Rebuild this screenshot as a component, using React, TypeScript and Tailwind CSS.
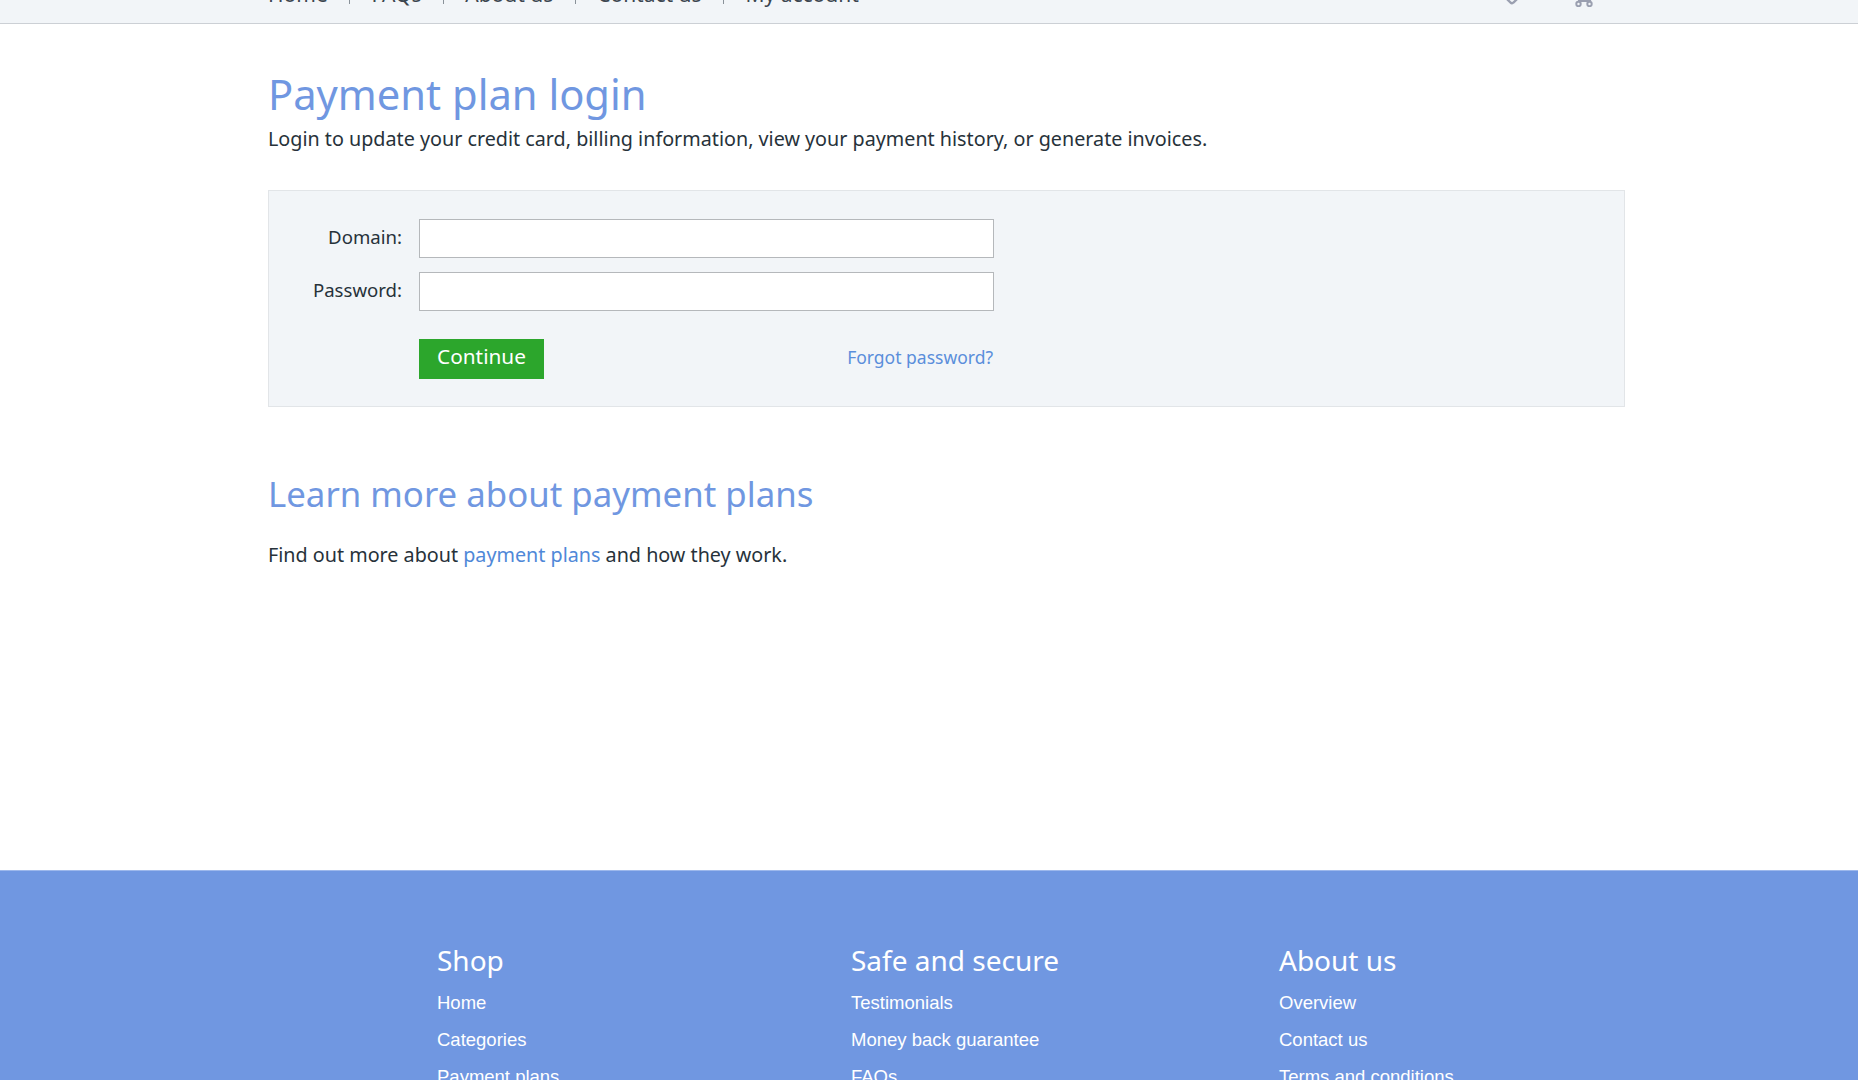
import { Heart } from 'lucide-react';

const navLinks = ['Home', 'FAQs', 'About us', 'Contact us', 'My account'];

const footerColumns = [
  { title: 'Shop', width: 'w-[414px]', links: ['Home', 'Categories', 'Payment plans'] },
  { title: 'Safe and secure', width: 'w-[428px]', links: ['Testimonials', 'Money back guarantee', 'FAQs'] },
  { title: 'About us', width: 'w-[300px]', links: ['Overview', 'Contact us', 'Terms and conditions'] },
];

function CartIcon() {
  return (
    <svg width="22" height="24" viewBox="0 0 22 24" fill="none" stroke="currentColor" strokeWidth="2">
      <path d="M1 3h3l2 15h11l2-11H5" />
      <circle cx="5.5" cy="21" r="2.2" />
      <circle cx="16.5" cy="21" r="2.2" />
    </svg>
  );
}

function Header() {
  return (
    <header className="h-[24px] overflow-hidden bg-[#f2f5f8] border-b border-[#ccd0d5]">
      <div className="ml-[268px] -mt-[26px] flex h-[42px] w-[1357px] items-center justify-between text-[21px] text-[#3c4650]">
        <nav className="flex items-center">
          {navLinks.map((link, i) => (
            <div key={link} className="flex items-center">
              {i > 0 && <span className="mx-[21.4px] h-[18px] w-px bg-[#8a9299]" />}
              <a>{link}</a>
            </div>
          ))}
        </nav>
        <div className="flex items-center gap-[50px] pr-[30px] text-[#9a9fb0]">
          <Heart size={22} strokeWidth={2.5} />
          <CartIcon />
        </div>
      </div>
    </header>
  );
}

function LoginForm() {
  return (
    <div className="mt-[38px] h-[217px] border border-[#e2e5e8] bg-[#f2f5f8] pl-[21px] pt-[28px]">
      <div className="flex items-center">
        <label className="w-[112px] pb-[4px] text-right text-[18.6px] text-[#27323a]">Domain:</label>
        <input className="ml-[17px] h-[39px] w-[575px] border border-[#b5b8bb] bg-white" />
      </div>
      <div className="mt-[14px] flex items-center">
        <label className="w-[112px] pb-[4px] text-right text-[18.6px] text-[#27323a]">Password:</label>
        <input type="password" className="ml-[17px] h-[39px] w-[575px] border border-[#b5b8bb] bg-white" />
      </div>
      <div className="ml-[129px] mt-[28px] flex w-[574px] items-center justify-between">
        <button className="h-[40px] w-[125px] bg-[#2ca62c] pb-[4px] text-[20.8px] text-white">Continue</button>
        <a className="pb-[3px] text-[17.5px] text-[#5a8edb]">Forgot password?</a>
      </div>
    </div>
  );
}

export default function App() {
  return (
    <div className="h-[1080px] overflow-hidden bg-white font-['Noto_Sans',sans-serif]">
      <Header />
      <main className="ml-[268px] h-[801px] w-[1357px]">
        <h1 className="mt-[45px] text-[41.7px] leading-[50px] text-[#7097e1]">Payment plan login</h1>
        <p className="mt-[7px] text-[19.74px] leading-[26px] text-[#27323a]">
          Login to update your credit card, billing information, view your payment history, or generate invoices.
        </p>
        <LoginForm />
        <h2 className="mt-[64px] text-[34.8px] leading-[46px] text-[#7097e1]">Learn more about payment plans</h2>
        <p className="mt-[25px] text-[19.74px] leading-[26px] text-[#27323a]">
          Find out more about <a className="text-[#4f88d8]">payment plans</a> and how they work.
        </p>
      </main>
      <footer className="h-[300px] border-t border-[#9db8ec] bg-[#7097e1] pl-[437px] pt-[71px] text-white">
        <div className="flex">
          {footerColumns.map((col) => (
            <div key={col.title} className={col.width}>
              <h3 className="text-[28px] leading-[36px]">{col.title}</h3>
              <ul className="mt-[6px] font-['Liberation_Sans',sans-serif] text-[18.5px]">
                {col.links.map((link) => (
                  <li key={link} className="h-[37px] leading-[37px]">{link}</li>
                ))}
              </ul>
            </div>
          ))}
        </div>
      </footer>
    </div>
  );
}
